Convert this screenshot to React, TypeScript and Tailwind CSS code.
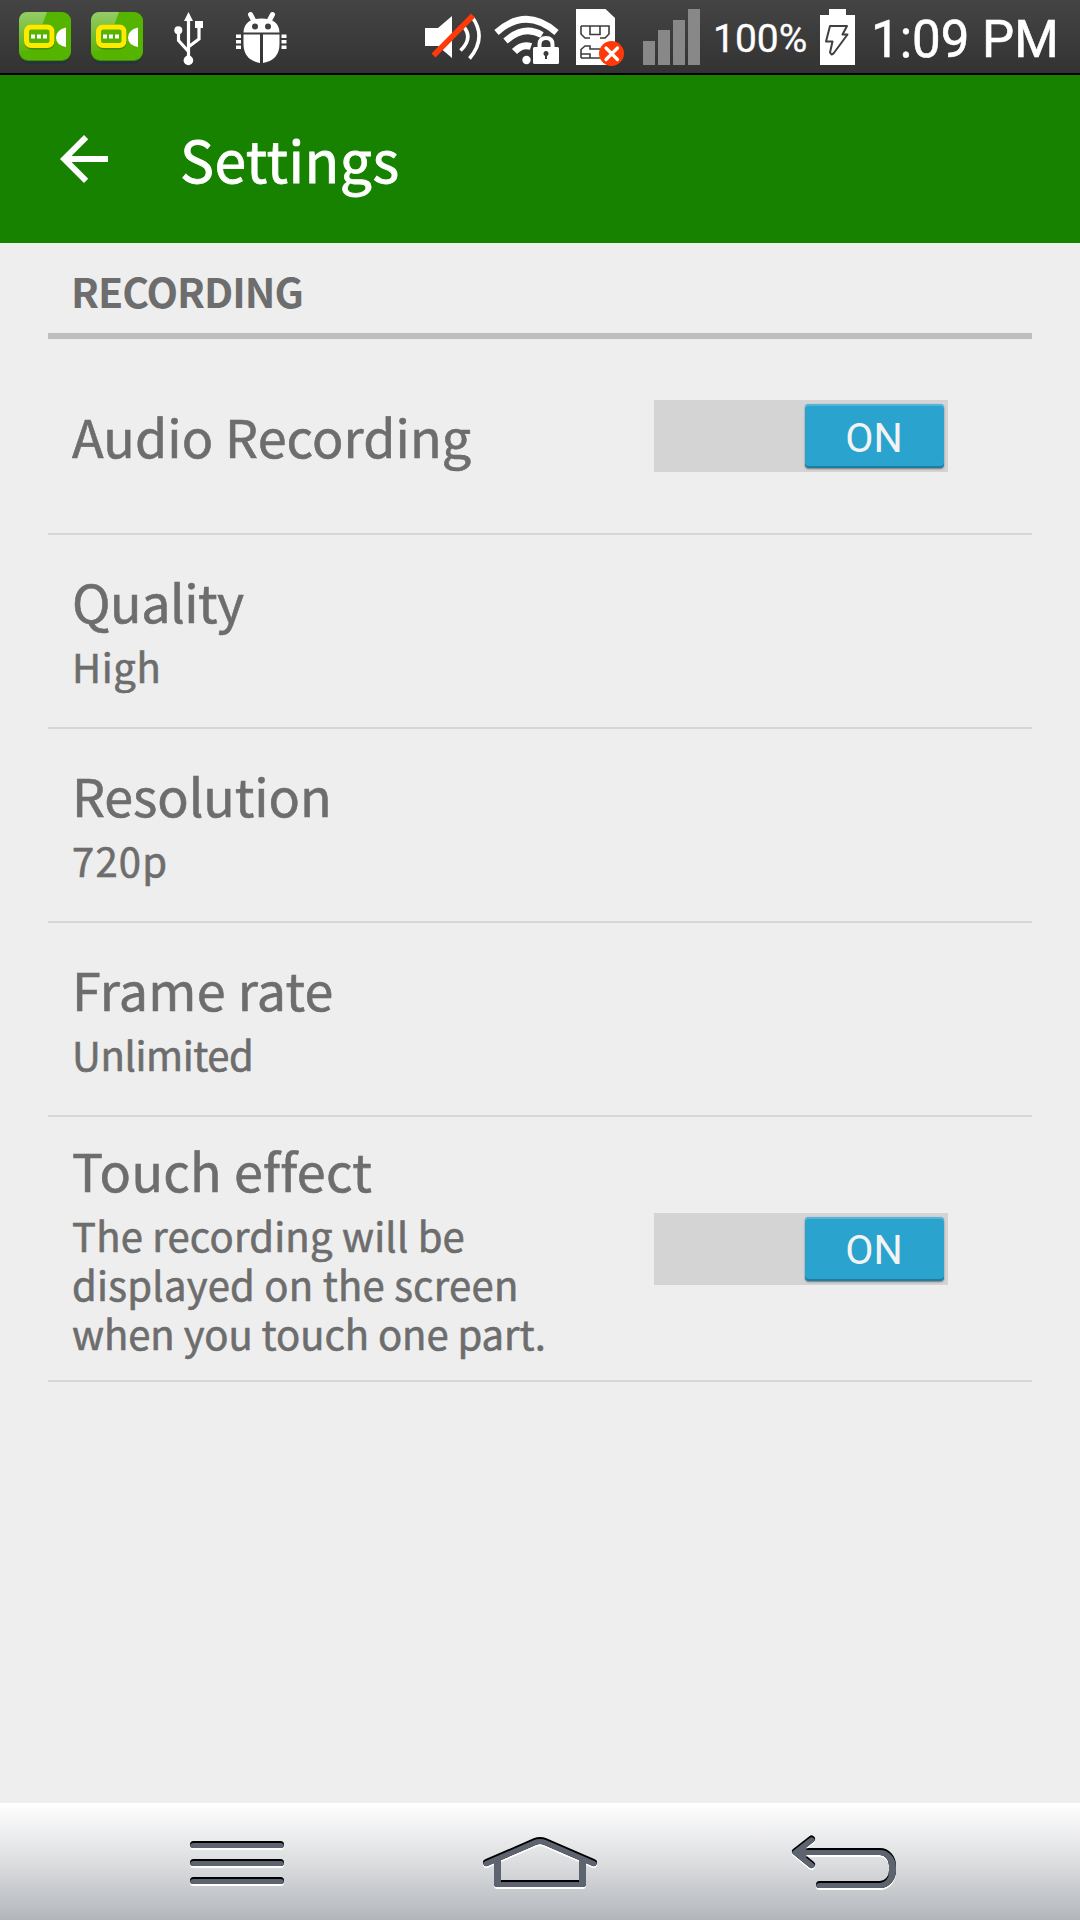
import type { ReactNode } from 'react'

const SETTINGS = [
  { title: 'Audio Recording', tracking: 'tracking-[0.1px]', toggle: true },
  { title: 'Quality', tracking: 'tracking-[-0.5px]', lines: [{ text: 'High', tracking: 'tracking-[0.6px]' }] },
  { title: 'Resolution', tracking: 'tracking-[-0.1px]', lines: [{ text: '720p', tracking: 'tracking-[1.2px]' }] },
  { title: 'Frame rate', tracking: 'tracking-[0.25px]', lines: [{ text: 'Unlimited', tracking: 'tracking-[-0.4px]' }] },
  {
    title: 'Touch effect',
    tracking: 'tracking-[0.3px]',
    lines: [
      { text: 'The recording will be', tracking: 'tracking-[0.2px]' },
      { text: 'displayed on the screen', tracking: 'tracking-[0.25px]' },
      { text: 'when you touch one part.', tracking: 'tracking-[-0.05px]' },
    ],
    toggle: true,
    tall: true,
  },
]

function StatusIcon({ x, width, className, children }: { x: number; width: number; className: string; children: ReactNode }) {
  return (
    <svg viewBox={`${x} 0 ${width} 73`} width={width} height={73} className={`shrink-0 ${className}`}>
      {children}
    </svg>
  )
}

function RecorderIcon({ className }: { className: string }) {
  return (
    <StatusIcon x={19} width={52} className={className}>
      <defs>
        <linearGradient id="gloss" x1="0" y1="0" x2="0" y2="1">
          <stop offset="0" stopColor="#95cc68" />
          <stop offset="1" stopColor="#5cb40c" />
        </linearGradient>
      </defs>
      <rect x="20" y="18" width="50" height="46" rx="9" fill="#27343c" />
      <rect x="19" y="12" width="52" height="49" rx="9" fill="#3f8f00" />
      <rect x="19" y="12" width="52" height="48" rx="9" fill="#55b400" />
      <path d="M28 12H47L36 42Q32 52 19 52V21Q19 12 28 12Z" fill="url(#gloss)" />
      <rect x="27" y="27.500" width="25" height="19" rx="5" fill="none" stroke="#3f8f00" strokeWidth="6" />
      <rect x="26.500" y="27" width="25.500" height="18.500" rx="4.500" fill="#55b400" stroke="#ffe900" strokeWidth="5" />
      <path d="M31 34.500h4v4h-4zM37 34.500h4v4h-4zM43 34.500h4v4h-4z" fill="#fff" />
      <path d="M66 27.500V47Q56 45 56 37.500T66 27.500Z" fill="#fff" />
    </StatusIcon>
  )
}

function StatusBar() {
  return (
    <div className="flex h-[75px] items-start border-b-2 border-black bg-linear-to-b from-[#444] to-[#333] pl-[19px] font-['Roboto',sans-serif] text-white">
      <RecorderIcon className="mr-5" />
      <RecorderIcon className="mr-[31px]" />
      {/* USB */}
      <StatusIcon x={174} width={29} className="mr-[33px]">
        <path d="M188.500 19V57M178.500 31V40.500L188 51M199 25V39L189 46.500" fill="none" stroke="#fff" strokeWidth="3.200" />
        <path d="M188.500 12L193 21H184ZM195 21h8v7h-8z" fill="#fff" />
        <circle cx="178.300" cy="30.300" r="4" fill="#fff" />
        <circle cx="188.400" cy="60.400" r="4.800" fill="#fff" />
      </StatusIcon>
      {/* USB debugging */}
      <StatusIcon x={236} width={51} className="mr-[137px]">
        <path d="M250.500 14.500L254.500 22M272.500 14.500L268.500 22" stroke="#fff" strokeWidth="5" strokeLinecap="round" />
        <path d="M243.500 32.500Q244 18.500 261.500 18.500T279.500 32.500Z" fill="#fff" />
        <circle cx="255" cy="26.500" r="3" fill="#3f3f3f" />
        <circle cx="268" cy="26.500" r="3" fill="#3f3f3f" />
        <path d="M243.500 34.500H260V63Q243.500 60 243.500 44ZM263 34.500H279.500V44Q279.500 60 263 63Z" fill="#fff" />
        <path d="M236 34.500h5v3.500h-5zM236 40h5v3.500h-5zM236 45.500h5v3.500h-5zM281.500 34.500h5v3.500h-5zM281.500 40h5v3.500h-5zM281.500 45.500h5v3.500h-5z" fill="#fff" />
      </StatusIcon>
      {/* muted sound */}
      <StatusIcon x={424} width={58} className="mr-3">
        <path d="M425 28H438L452 16V58L438 46H425Z" fill="#fff" />
        <path d="M463.500 26.500Q473.500 38 460.500 50.500M472.500 17.500Q487 38 469.500 58.500" fill="none" stroke="#fff" strokeWidth="3.600" />
        <path d="M433.500 55.500L473 15.500" stroke="#ff3a08" strokeWidth="5.500" />
      </StatusIcon>
      {/* secured wifi */}
      <StatusIcon x={494} width={66} className="mr-4">
        <g fill="none" stroke="#fff" strokeWidth="6.500">
          <path d="M496.500 32.500Q526 6 556.500 32.500" />
          <path d="M505.500 41Q524 24.500 542 35" />
          <path d="M514.500 51.500Q522 43.500 531 46.500" strokeWidth="7" />
        </g>
        <circle cx="526.500" cy="60" r="4.200" fill="#fff" />
        <path d="M539.500 48V44.500Q539.500 38 546 38T552.500 44.500V48" fill="none" stroke="#fff" strokeWidth="4" />
        <rect x="533" y="47" width="26" height="17" rx="1.500" fill="#fff" />
        <circle cx="546" cy="53.500" r="2.500" fill="#3c3c3c" />
        <path d="M545 54h2v5h-2z" fill="#3c3c3c" />
      </StatusIcon>
      {/* missing sim */}
      <StatusIcon x={576} width={48} className="mr-[19px]">
        <path d="M576 9H605.500L615 18V65H576Z" fill="#fff" />
        <path
          d="M581 26H590V34.500H600V26H609V34L605 38H600M590 38H585L581 34V26M590 26H600M581 58V49.500L585 46H590V49H600M581 54H590V58M600 58H581M590 54V58"
          fill="none"
          stroke="#3c3c3c"
          strokeWidth="1.600"
        />
        <circle cx="611.500" cy="53.500" r="12.500" fill="#ff3a08" />
        <path d="M606 48L617.500 59.500M617.500 48L606 59.500" stroke="#fff" strokeWidth="3.200" strokeLinecap="round" />
      </StatusIcon>
      {/* signal strength */}
      <StatusIcon x={643} width={57} className="mr-[13px]">
        <path d="M643 41h12v24h-12zM658 30h12v35h-12zM673 20h12v45h-12zM688 9h12v56h-12z" fill="#888" />
      </StatusIcon>
      <span className="mt-[15px] w-[107px] whitespace-nowrap text-[39px] leading-[48px] [-webkit-text-stroke:0.3px_currentColor]">100%</span>
      <StatusIcon x={820} width={35} className="mr-[16px]">
        <path d="M829 9h17v6h9v50h-35V15h9z" fill="#fff" />
        <path d="M830 26H847L842.500 34.500H847.500L833.500 53.500L831.500 54.500L830 52.500L832.500 41.500H826Z" fill="none" stroke="#404040" strokeWidth="2" strokeLinejoin="round" />
      </StatusIcon>
      <span className="mt-[10px] whitespace-nowrap text-[51px] leading-[60px] [-webkit-text-stroke:0.6px_currentColor]">1:09 PM</span>
    </div>
  )
}

function Toggle() {
  return (
    <div className="mr-[84px] flex h-[72px] w-[294px] shrink-0 items-start justify-end bg-[#d4d4d4] p-1">
      <div className="flex h-16 w-[139px] items-center justify-center rounded-[4px] bg-[#2aa3cf] pt-1 pr-px font-['Roboto',sans-serif] text-[41px] leading-none text-[#f3f3f3] shadow-[inset_0_2px_0_#55b5d8,inset_0_-2px_0_#1b7fa5,0_1px_2px_rgba(0,0,0,0.45)]">
        ON
      </div>
    </div>
  )
}

/* Embossed outline: white lip below, black inner edge on top, slate body */
function NavIcon({ id, viewBox, width, className, d }: { id: string; viewBox: string; width: number; className: string; d: string }) {
  const line = { d, fill: 'none', strokeWidth: 7, strokeLinecap: 'round', strokeLinejoin: 'round' } as const
  return (
    <svg viewBox={viewBox} width={width} height={117} className={`shrink-0 ${className}`}>
      <mask id={id} maskUnits="userSpaceOnUse" x="0" y="1803" width="1080" height="117">
        <path {...line} stroke="#fff" transform="translate(0 2)" />
      </mask>
      <path {...line} stroke="#fff" transform="translate(0 2)" />
      <path {...line} stroke="#000" />
      <g mask={`url(#${id})`}>
        <path {...line} stroke="#5e6370" />
      </g>
    </svg>
  )
}

export default function App() {
  return (
    <div className="flex h-[1920px] w-[1080px] flex-col overflow-hidden bg-[#eee] font-['Noto_Sans_CJK_KR',sans-serif] text-[#6d6d6d]">
      <StatusBar />
      <header className="flex h-[168px] items-center bg-[#168200] pl-12 text-white">
        <svg viewBox="0 0 24 24" width={72} height={72} fill="currentColor">
          <path d="M20 11H7.830l5.590-5.590L12 4l-8 8 8 8 1.410-1.410L7.830 13H20v-2z" />
        </svg>
        <h1 className="mb-[3px] ml-[60px] text-[57px] leading-[72px] tracking-[0.45px] [-webkit-text-stroke:0.8px_currentColor]">Settings</h1>
      </header>

      <main className="flex-1 px-12">
        <h2 className="h-24 border-b-[6px] border-[#bebebe] pt-[17px] pl-[23px] text-[41px] leading-[60px] font-bold tracking-[-1px]">RECORDING</h2>
        {SETTINGS.map(({ title, tracking, lines, toggle, tall }) => (
          <section
            key={title}
            className={`flex items-center justify-between border-b-2 border-[#d6d6d6] pl-6 ${tall ? 'h-[265px]' : toggle ? 'h-[196px]' : 'h-[194px]'}`}
          >
            <div className="whitespace-nowrap [-webkit-text-stroke:0.6px_currentColor]">
              <div className={`text-[52px] leading-[60px] ${tracking}`}>{title}</div>
              {lines && (
                <div className="mt-[11px] text-[40px] leading-[49px]">
                  {lines.map((line) => (
                    <div key={line.text} className={line.tracking}>
                      {line.text}
                    </div>
                  ))}
                </div>
              )}
            </div>
            {toggle && <Toggle />}
          </section>
        ))}
      </main>

      <nav className="flex h-[117px] bg-linear-to-b from-white via-[#dddee0] to-[#b2b6bb]">
        <NavIcon id="menu" viewBox="186 1803 102 117" width={102} className="ml-[186px]" d="M193.500 1844.500H280.500M193.500 1862.500H280.500M193.500 1880.500H280.500" />
        <NavIcon
          id="home"
          viewBox="480 1803 120 117"
          width={120}
          className="ml-[192px]"
          d="M486.500 1862.500L535 1841.500Q540 1839.500 545 1841.500L593.500 1862.500M497.500 1859V1883.500H582.500V1859"
        />
        <NavIcon
          id="back"
          viewBox="788 1803 112 117"
          width={112}
          className="ml-[188px]"
          d="M811.500 1839L795.500 1851.500L811.500 1864.500M797 1851.500H880A12.500 14 0 0 1 892.500 1865.500V1870.500A12.500 14 0 0 1 880 1884.500H819.500"
        />
      </nav>
    </div>
  )
}
